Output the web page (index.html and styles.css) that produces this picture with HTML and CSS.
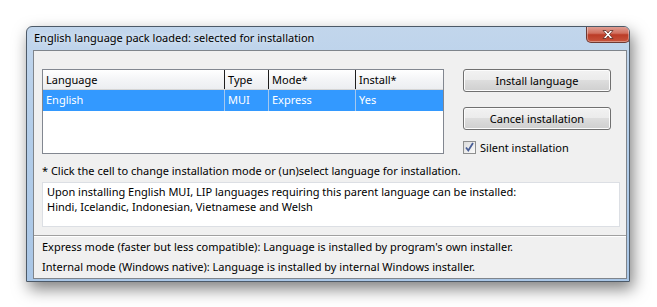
FILE: index.html
```html
<!DOCTYPE html>
<html lang="en">
<head>
    <meta charset="UTF-8">
    <title>English language pack loaded</title>
    <link rel="stylesheet" href="styles.css">
</head>
<body>
    <div class="window">
        <!-- Title bar -->
        <div class="titlebar">
            <span class="title">English language pack loaded: selected for installation</span>
            <button class="close-btn" aria-label="Close">
                <svg width="16" height="11" viewBox="0 0 16 11">
                    <path d="M3 1.5h3l2 2.5 2-2.5h3l-3.5 4 3.5 4h-3l-2-2.5-2 2.5h-3l3.5-4z" fill="#fff" stroke="#5b2a22" stroke-width="0.8"/>
                </svg>
            </button>
        </div>

        <div class="client">
            <div class="main">
                <div class="top-row">
                    <div class="lang-table">
                        <div class="row header">
                            <div class="cell c-lang">Language</div>
                            <div class="cell c-type">Type</div>
                            <div class="cell c-mode">Mode*</div>
                            <div class="cell c-inst">Install*</div>
                        </div>
                        <div class="row selected">
                            <div class="cell c-lang">English</div>
                            <div class="cell c-type">MUI</div>
                            <div class="cell c-mode">Express</div>
                            <div class="cell c-inst">Yes</div>
                        </div>
                    </div>

                    <div class="side">
                        <button class="btn">Install language</button>
                        <button class="btn">Cancel installation</button>
                        <label class="check">
                            <span class="box">
                                <svg width="11" height="11" viewBox="0 0 11 11">
                                    <path d="M2 5.5l2.3 3 4.7-7.5" fill="none" stroke="#4a5f97" stroke-width="1.8"/>
                                </svg>
                            </span>
                            Silent installation
                        </label>
                    </div>
                </div>

                <p class="note">* Click the cell to change installation mode or (un)select language for installation.</p>

                <div class="info-box">
                    Upon installing English MUI, LIP languages requiring this parent language can be installed:<br>
                    Hindi, Icelandic, Indonesian, Vietnamese and Welsh
                </div>
            </div>

            <div class="footer">
                <p>Express mode (faster but less compatible): Language is installed by program's own installer.</p>
                <p>Internal mode (Windows native): Language is installed by internal Windows installer.</p>
            </div>
        </div>
    </div>
</body>
</html>
```

FILE: styles.css
```css
/* Base */
* {
    box-sizing: border-box;
    margin: 0;
    padding: 0;
}

html, body {
    height: 100%;
}

body {
    background: #ffffff;
    font-family: 'Noto Sans', 'Open Sans', sans-serif;
    font-size: 11px;
    color: #000000;
    padding: 26px 0 0 26px;
}

/* Window frame */
.window {
    width: 604px;
    height: 256px;
    background: linear-gradient(180deg, #c2d6ec 0%, #b3cde9 40%, #a9c6e6 100%);
    border: 1px solid #4d5a68;
    border-radius: 6px 6px 0 0;
    box-shadow: 3px 7px 16px rgba(0, 0, 0, 0.5);
    display: flex;
    flex-direction: column;
    overflow: hidden;
}

.titlebar {
    height: 23px;
    flex-shrink: 0;
    display: flex;
    align-items: flex-start;
    justify-content: space-between;
    padding-left: 7px;
}

.title {
    font-size: 11px;
    line-height: 21px;
    color: #000000;
    text-shadow: 0 0 6px rgba(255, 255, 255, 0.9);
}

.close-btn {
    width: 44px;
    height: 17px;
    margin-top: -1px;
    margin-right: -1px;
    border: 1px solid #6e3a33;
    border-top: none;
    border-radius: 0 0 5px 5px;
    background: linear-gradient(180deg, #e3a59a 0%, #d1705f 45%, #bb3c27 55%, #c8553d 100%);
    box-shadow: inset 0 0 0 1px rgba(255, 255, 255, 0.35);
    display: flex;
    align-items: center;
    justify-content: center;
}

/* Client area */
.client {
    flex: 1;
    margin: 0 2px 2px 6px;
    background: #f0f0f0;
    border: 1px solid #7f858c;
    display: flex;
    flex-direction: column;
}

.main {
    padding: 18px 7px 0 8px;
    border-bottom: 1px solid #a0a0a0;
    height: 185px;
    flex-shrink: 0;
}

.top-row {
    display: flex;
    gap: 19px;
}

/* Language table */
.lang-table {
    width: 402px;
    height: 85px;
    background: #ffffff;
    border: 1px solid #828790;
}

.row {
    display: flex;
    height: 21px;
}

.row.header {
    height: 20px;
    background: linear-gradient(180deg, #ffffff 0%, #f4f5f7 50%, #eceef1 100%);
    border-bottom: 1px solid #d5d5d5;
}

.cell {
    padding-left: 3px;
    line-height: 20px;
    white-space: nowrap;
}

.header .cell + .cell {
    border-left: 1px solid #1e1e1e;
}

.c-lang { width: 181px; }
.c-type { width: 44px; }
.c-mode { width: 87px; }
.c-inst { width: 88px; }

.row.selected {
    background: #3399ff;
    color: #ffffff;
}

.selected .cell + .cell {
    border-left: 1px solid #a6c8ee;
}

/* Side buttons */
.side {
    width: 148px;
    display: flex;
    flex-direction: column;
}

.btn {
    height: 23px;
    font-family: inherit;
    font-size: 11px;
    color: #000000;
    border: 1px solid #707070;
    border-radius: 3px;
    background: linear-gradient(180deg, #f2f2f2 0%, #ebebeb 49%, #dddddd 50%, #cfcfcf 100%);
    box-shadow: inset 0 0 0 1px #fcfcfc;
    margin-bottom: 15px;
}

.check {
    display: flex;
    align-items: center;
    gap: 4px;
    margin-top: -5px;
    font-size: 11px;
}

.box {
    width: 13px;
    height: 13px;
    border: 1px solid #8e8f8f;
    background: linear-gradient(135deg, #dcdcdc, #fbfbfb);
    display: flex;
    align-items: center;
    justify-content: center;
}

.note {
    margin-top: 8px;
    line-height: 15px;
}

.info-box {
    margin-top: 4px;
    width: 578px;
    height: 45px;
    background: #ffffff;
    border: 1px solid #dcdfe4;
    padding: 1px 4px;
    line-height: 15px;
}

/* Footer */
.footer {
    border-top: 1px solid #ffffff;
    padding: 0 8px;
}

.footer p {
    line-height: 20px;
}
```
